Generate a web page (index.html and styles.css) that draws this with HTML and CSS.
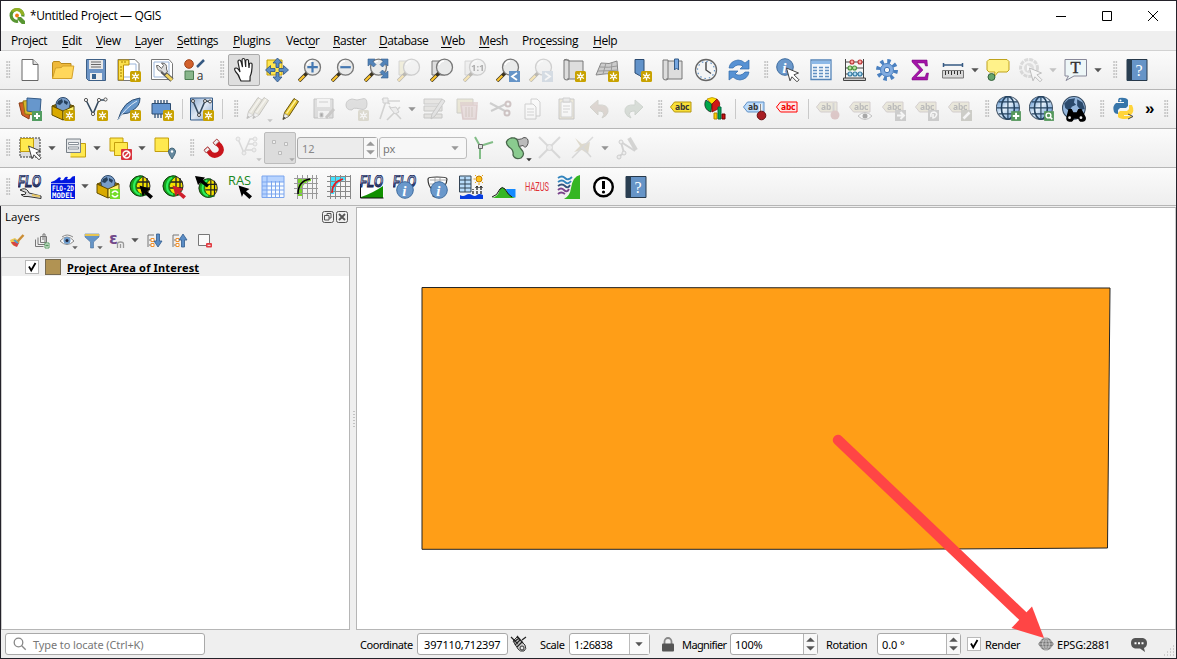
FILE: index.html
```html
<!DOCTYPE html>
<html lang="en">
<head>
<meta charset="utf-8">
<title>*Untitled Project — QGIS</title>
<link rel="stylesheet" href="styles.css">
</head>
<body>
<svg class="defs" width="0" height="0">
<defs>
<linearGradient id="steel" x1="0" y1="0" x2="0" y2="1"><stop offset=".15" stop-color="#7f9ad0"/><stop offset=".5" stop-color="#c9d6f0"/><stop offset=".6" stop-color="#4a64a8"/><stop offset="1" stop-color="#10183c"/></linearGradient>
<linearGradient id="sky" x1="0" y1="0" x2="1" y2="1"><stop offset="0" stop-color="#8fadd2"/><stop offset=".5" stop-color="#dfe8f3"/><stop offset="1" stop-color="#7f9dc4"/></linearGradient>
<linearGradient id="ocean" x1="0" y1="0" x2="1" y2="1"><stop offset="0" stop-color="#3f7fc4"/><stop offset=".45" stop-color="#e4f0fb"/><stop offset="1" stop-color="#3c7cc2"/></linearGradient>
<symbol id="star" viewBox="0 0 24 24"><rect x="13" y="13" width="11" height="11" rx="1.500" fill="#c8a200"/><path d="M18.500 14.500v8M15 16.500l7 4M15 20.500l7-4" stroke="#fff" stroke-width="1.300"/><circle cx="18.500" cy="18.500" r="1.900" fill="#fff"/><circle cx="18.500" cy="18.500" r=".8" fill="#c8a200"/></symbol>
<symbol id="mag" viewBox="0 0 24 24"><path d="M1 23l8-8" stroke="#3b3320" stroke-width="3.600"/><path d="M1.300 22.700l5-5" stroke="#fcc52e" stroke-width="2.200"/><circle cx="14.500" cy="9.200" r="8" fill="#e9eaea" stroke="#777" stroke-width="1.300"/><path d="M9 7a6 6 0 0 1 5-4" fill="none" stroke="#fff" stroke-width="1.500"/></symbol>
<symbol id="cursor" viewBox="0 0 24 24"><path d="M10.500 10l12 5-4.500 1.800 5 5-2 2-5-5-2 4z" fill="#fff" stroke="#444" stroke-width="1"/></symbol>
<symbol id="tag" viewBox="0 0 24 24"><path d="M1.500 10l4-5h16.500v10H5.500z"/></symbol>
<symbol id="globe" viewBox="0 0 24 24"><circle cx="11" cy="11" r="10.700" fill="url(#ocean)" stroke="#4a5a6c" stroke-width="1"/><path d="M11 .5v21M2.500 5.500h17M.5 11h21M2.500 16.500h17" fill="none" stroke="#24425f" stroke-width="1.100"/><ellipse cx="11" cy="11" rx="6" ry="10.500" fill="none" stroke="#24425f" stroke-width="1.500"/></symbol>
<symbol id="gglobe" viewBox="0 0 24 24"><circle cx="11" cy="11" r="10" fill="#f3e300" stroke="#222" stroke-width="1"/><path d="M14 1v20M18 3v16M8 7h12.500M8 13h13" stroke="#222" stroke-width="1.300"/><path d="M11 .8A10.200 10.200 0 0 0 12 21.200l6-1.500q-9 .3-10.500-6T14 1z" fill="#17a51f" stroke="#064b0d" stroke-width=".8"/><path d="M10 2.500q-5 3-5 9t6 8" fill="none" stroke="#2fef5f" stroke-width="2"/></symbol>
<symbol id="arrowbig" viewBox="0 0 24 24"><path d="M10.500 10.500l11 3.500-3.500 2.200 6 5-2.600 2.800-6-5.500-1.500 3.500z"/></symbol>
<symbol id="info" viewBox="0 0 24 24"><circle cx="9" cy="9" r="8.300" fill="#6a98cb" stroke="#3e6c9f"/><text x="6.200" y="14.500" font-family="Liberation Serif" font-size="15" font-style="italic" font-weight="700" fill="#fff">i</text></symbol>
<symbol id="flo" viewBox="0 0 24 24"><text x="0" y="12.300" textLength="23" lengthAdjust="spacingAndGlyphs" font-family="Liberation Sans" font-size="16.500" font-weight="700" font-style="italic" fill="url(#steel)" stroke="#16204a" stroke-width="1">FLO</text></symbol>
<symbol id="helpbook" viewBox="0 0 24 24"><path d="M2 1.500h20v21H2z" fill="#6694c7" stroke="#26384a"/><path d="M2 1h5v22H2z" fill="#293e51"/><text x="10.500" y="17.500" font-family="Liberation Serif" font-size="16" fill="#fff">?</text></symbol>
<symbol id="pencil" viewBox="0 0 24 24"><path d="M4 22.500l1.500-7L15 1.500l4.500 3L10 19z" fill="#e5c42d" stroke="#66520b"/><path d="M7.500 16.500L17 3" stroke="#fff29b" stroke-width="1.400"/><path d="M4 22.500l1.500-6L10 19z" fill="#eee" stroke="#777" stroke-width=".5"/><path d="M4 22.500l.7-2.700 2 1.200z" fill="#333"/></symbol>
<symbol id="down" viewBox="0 0 8 5"><path d="M.3.3h7.400L4 4.300z"/></symbol>
<symbol id="cube" viewBox="0 0 24 24"><path d="M1 9l10-4 12 4-11 5z" fill="#8c6b00" stroke="#614c00"/><circle cx="12" cy="7.500" r="7" fill="#789dc8" stroke="#2c496b"/><path d="M7 4l4-2 1 3-3 3-3-1zM13 3l4 2-1 3-3-2z" fill="#27415c"/><path d="M1 9l11 5v9L1 18z" fill="#d9aa00" stroke="#614c00"/><path d="M12 14l11-5v9l-11 5z" fill="#fff36a" stroke="#614c00"/></symbol>
</defs>
</svg>

<div class="window">
<header class="titlebar">
 <svg class="logo" viewBox="0 0 16 16"><path d="M9 13.200A5.900 5.900 0 1 1 13.800 8.500" fill="none" stroke="#589632" stroke-width="3.200"/><path d="M3.300 3.600A5.900 5.900 0 0 1 13.700 7" fill="none" stroke="#93b023" stroke-width="3"/><path d="M8.500 9H12l4 4v3h-3.200L8.500 11.500z" fill="#589632"/><circle cx="8" cy="7.500" r="1.900" fill="#ee7913"/></svg>
 <span class="title">*Untitled Project — QGIS</span>
 <div class="winctl">
  <svg viewBox="0 0 12 12"><path d="M1 6.500h10"/></svg><svg viewBox="0 0 12 12"><path d="M1.500 1.500h9v9h-9z"/></svg><svg viewBox="0 0 12 12"><path d="M1 1l10 10M11 1L1 11"/></svg>
 </div>
</header>

<nav class="menubar">
<span>Pro<u>j</u>ect</span><span><u>E</u>dit</span><span><u>V</u>iew</span><span><u>L</u>ayer</span><span><u>S</u>ettings</span><span><u>P</u>lugins</span><span>Vect<u>o</u>r</span><span><u>R</u>aster</span><span><u>D</u>atabase</span><span><u>W</u>eb</span><span><u>M</u>esh</span><span>Pro<u>c</u>essing</span><span><u>H</u>elp</span>
</nav>

<div class="toolbar">
<i class="grip"></i>
<b><svg viewBox="0 0 24 24"><path d="M4 1.500h11l5 5v16H4z" fill="#fff" stroke="#666"/><path d="M15 1.500v5h5" fill="#ddd" stroke="#666"/></svg></b>
<b><svg viewBox="0 0 24 24"><path d="M1.500 20.500V5l1-1.500h6L10 5.500h10V10" fill="#efb93a" stroke="#b88a1d"/><path d="M1.500 20.500L4.500 10l6-.5 1-1.500h11.300l-2 12.500z" fill="#ffd75b" stroke="#d3a12a"/></svg></b>
<b><svg viewBox="0 0 24 24"><path d="M2.500 1.500h19v21h-17l-2-2z" fill="#6c94c5" stroke="#3d5f86"/><path d="M5 2h14v9H5z" fill="#e8e8e8"/><path d="M7 4h10M7 6.500h10M7 9h10" stroke="#666"/><path d="M6 15h12v7H6z" fill="#eee"/><path d="M8 16h4v5H8z" fill="#35618e"/></svg></b>
<b><svg viewBox="0 0 24 24"><path d="M1 1.500h17l4 4v17H1z" fill="#fff" stroke="#777"/><path d="M6 6h13v13H6z" fill="#fff" stroke="#9bb5da"/><path d="M1.500 2H12v5H6.500v15h-5z" fill="#fbe04d" stroke="#bd9407"/><path d="M3 9h2M3 12h2M3 15h2M3 18h2M8 3v2M5 3v2" stroke="#a47e00"/><use href="#star"/></svg></b>
<b><svg viewBox="0 0 24 24"><path d="M1.500 1.500H19l3.500 4v16h-21z" fill="#fff" stroke="#777"/><path d="M4 4h15v15H4z" fill="#fff" stroke="#9bb5da"/><path d="M12 13l10 9" stroke="#555" stroke-width="4.600"/><path d="M16 16.500l6 5.500" stroke="#f2d45d" stroke-width="3"/><path d="M8.500 7.500l3 3 2-3-2-2.500q6 0 5 6l1 3-3 2-3-3q-4 1-5-5.500z" fill="#ddd" stroke="#666"/></svg></b>
<b><svg viewBox="0 0 24 24"><circle cx="6" cy="6" r="4.300" fill="#d2612c" stroke="#9e4219"/><path d="M21 2l-7 7" stroke="#365a83" stroke-width="2.500"/><path d="M2 13h8.500v8.500H2z" fill="#89b68c" stroke="#4c7d51"/><text x="13.800" y="21.500" font-family="Open Sans" font-size="12" fill="#333">a</text></svg></b>
<i class="grip"></i>
<b class="pressed"><svg viewBox="0 0 24 24"><path d="M8 21q-1-4-4.500-7.500Q1.500 10 4 10q2 0 4 4L6 4q0-2 1.300-2T9.200 4l1.300 5L10 2.500Q10 .5 11.500.5T13 2.500l.7 6.500V3.500q0-2 1.500-2t1.300 2L17 10l.3-3.500Q17.500 5 18.800 5t1.300 1.500q0 8-2 12L18 23H9z" fill="#fff" stroke="#222" stroke-width="1.200"/></svg></b>
<b><svg viewBox="0 0 24 24"><path d="M2 2h15v15H2z" fill="#ffe64f" stroke="#c19c08"/><path d="M12.500 0l4.500 5h-3v4.500h-3V5H8zM12.500 24l4.500-5h-3v-4.500h-3V19H8zM.5 12l5-4.500V10.500H10v3H5.500v3zM23.500 12l-5-4.500V10.500H14v3h4.500v3z" fill="#5c8dc4" stroke="#2d5280" stroke-width=".8"/></svg></b>
<b><svg viewBox="0 0 24 24"><use href="#mag"/><path d="M14.500 4v10.500M9.300 9.200h10.500" stroke="#4478b2" stroke-width="2.200"/></svg></b>
<b><svg viewBox="0 0 24 24"><use href="#mag"/><path d="M9.300 9.200h10.500" stroke="#4478b2" stroke-width="2.200"/></svg></b>
<b><svg viewBox="0 0 24 24"><use href="#mag"/><g fill="#5283b8" stroke="#365e8d" stroke-width=".6"><path d="M4 1h7L9 3.500l3 3-2.500 2.500-3-3L4 8zM24 1v7l-2.500-2-3 3L16 6.500l3-3L17 1zM24 20h-7l2-2.500-3-3 2.500-2.500 3 3L24 13z"/></g></svg></b>
<b class="off"><svg viewBox="0 0 24 24"><path d="M2 3h13v14H2z" fill="#e1d9a0" stroke="#888"/><use href="#mag"/></svg></b>
<b><svg viewBox="0 0 24 24"><path d="M2 3h13v14H2z" fill="#ddd" stroke="#777"/><use href="#mag"/></svg></b>
<b class="off"><svg viewBox="0 0 24 24"><path d="M2 3h13v14H2z" fill="#ddd" stroke="#888"/><use href="#mag"/><text x="8" y="13" font-family="Noto Sans" font-weight="700" font-size="9.500">1:1</text></svg></b>
<b><svg viewBox="0 0 24 24"><use href="#mag"/><path d="M13 13h11v11H13z" fill="#6694c7"/><path d="M21 15l-5 3.500 5 3.500" fill="none" stroke="#fff" stroke-width="1.800"/></svg></b>
<b class="off"><svg viewBox="0 0 24 24"><use href="#mag"/><path d="M13 13h11v11H13z" fill="#91a8c1"/><path d="M16 15l5 3.500-5 3.500" fill="none" stroke="#fff" stroke-width="1.800"/></svg></b>
<b><svg viewBox="0 0 24 24"><path d="M2 2h5v18q0 2-2 2-3 0-3-2zM7 3h14v18H5" fill="#ddd" stroke="#777"/><path d="M2 2q2-2 5 1" fill="none" stroke="#777"/><use href="#star"/></svg></b>
<b><svg viewBox="0 0 24 24"><path d="M6 5q8 2 16-2l1 13q-12-1-22 1z" fill="#ccc" stroke="#888"/><path d="M5 9q9 1 17-1M3 13q10 0 20-1M11 5L8 16M17 4l-1 12" fill="none" stroke="#999"/><use href="#star"/></svg></b>
<b><svg viewBox="0 0 24 24"><path d="M7 1.500h9V21l-4.500-3.500L7 15z" fill="#6293ca" stroke="#2b4a70"/><use href="#star"/></svg></b>
<b><svg viewBox="0 0 24 24"><path d="M2 2h5v18q0 2-2 2-3 0-3-2zM7 3h14v18H5" fill="#ddd" stroke="#777"/><path d="M13.500 1h4v11l-2-2-2 2z" fill="#77a7e0" stroke="#335a87"/></svg></b>
<b><svg viewBox="0 0 24 24"><circle cx="12" cy="12" r="10.500" fill="#f4f5f5" stroke="#666" stroke-width="1.300"/><circle cx="12" cy="12" r="8.500" fill="none" stroke="#6694c7" stroke-width="1.200" stroke-dasharray="1.500 2.950"/><path d="M12 4v8l5 3.500" fill="none" stroke="#444" stroke-width="1.400"/></svg></b>
<b><svg viewBox="0 0 24 24"><path d="M2 10Q3 3 11 2q4 0 7 3l4-3v9h-9l3-3q-6-3-10 2zM22 14q-1 7-9 8-4 0-7-3l-4 3v-9h9l-3 3q6 3 10-2z" fill="#5792d4" stroke="#326aa9" stroke-width=".7"/></svg></b>
<i class="grip"></i>
<b><svg viewBox="0 0 24 24"><use href="#info"/><use href="#cursor"/></svg></b>
<b><svg viewBox="0 0 24 24"><path d="M2 2h20v19.500H2z" fill="#f1f6fb" stroke="#5484b8" stroke-width="1.300"/><path d="M2.500 3h19v3h-19z" fill="#8db9e7"/><path d="M4 9.500h4M10 9.500h4M16 9.500h4M4 12.500h4M10 12.500h4M16 12.500h4M4 15.500h4M10 15.500h4M16 15.500h4M4 18.500h4M10 18.500h4M16 18.500h4" stroke="#6290c1" stroke-width="1.300"/></svg></b>
<b><svg viewBox="0 0 24 24"><path d="M3.500 1v19M21.500 1v19M3.500 4h18M3.500 10h18M3.500 16h18" stroke="#444"/><path d="M1.500 20h22v2.500h-22z" fill="#ccc" stroke="#444"/><g stroke-width="1.100"><g fill="#f9a7a3" stroke="#b33"><circle cx="10" cy="4" r="2"/><circle cx="18" cy="4" r="2"/></g><g fill="#b8e2a0" stroke="#48913a"><circle cx="8" cy="10" r="2"/><circle cx="12.500" cy="10" r="2"/></g><g fill="#afdcf5" stroke="#347aa2"><circle cx="8" cy="16" r="2"/><circle cx="13" cy="16" r="2"/><circle cx="18" cy="16" r="2"/></g></g></svg></b>
<b><svg viewBox="0 0 24 24"><circle cx="12" cy="12" r="8.700" fill="none" stroke="#4a80c0" stroke-width="4.500" stroke-dasharray="3.300 3.530"/><circle cx="12" cy="12" r="6.500" fill="#82ace0" stroke="#4a80c0"/><circle cx="12" cy="12" r="2.700" fill="#f7f7f7" stroke="#3e73b4"/></svg></b>
<b><svg viewBox="0 0 24 24"><path d="M4 2h15l.5 6h-2l-1-3H9l6 7-7 7h9l1.500-4h2l-1 7H4v-2l7.500-8L4 4z" fill="#a314a7" stroke="#730079" stroke-width=".5"/></svg></b>
<b><svg viewBox="0 0 24 24"><path d="M2 7h20M2.500 5v4M21.500 5v4" stroke="#365a83" stroke-width="1.500"/><path d="M1.500 12.500h21V20h-21z" fill="#d8d8d8" stroke="#777"/><path d="M4.500 13v4M7.500 13v3M10.500 13v4M13.500 13v3M16.500 13v4M19.500 13v3" stroke="#333"/></svg></b>
<s><svg><use href="#down"/></svg></s>
<b><svg viewBox="0 0 24 24"><path d="M7 17v4" stroke="#555"/><path d="M3 1.500h18l2 2V12l-2 2H12l-4 5 1-5H3l-2-2V3.500z" fill="#fff28a" stroke="#bfa31c"/><circle cx="5.500" cy="19" r="3.500" fill="#68a56d" stroke="#34623b"/></svg></b>
<b class="off"><svg viewBox="0 0 24 24"><circle cx="10" cy="10" r="8.500" fill="#eee" stroke="#999" stroke-width="3" stroke-dasharray="4 1"/><circle cx="10" cy="10" r="5" fill="#aaa"/><path d="M8 7l5 3-5 3z" fill="#fff"/><use href="#cursor"/></svg></b>
<s class="off"><svg><use href="#down"/></svg></s>
<b><svg viewBox="0 0 24 24"><path d="M1 1.500h21.500V18H10l-8 4.500L4.500 18H1z" fill="#eef7f8" stroke="#889"/><text x="6.500" y="15" font-family="Liberation Serif" font-size="16.500" fill="#333" stroke="#333" stroke-width=".4">T</text></svg></b>
<s><svg><use href="#down"/></svg></s>
<i class="grip"></i>
<b><svg viewBox="0 0 24 24"><use href="#helpbook"/></svg></b>
</div>

<div class="toolbar">
<i class="grip"></i>
<b><svg viewBox="0 0 24 24"><path d="M1 6l12-1-2 17-7-4z" fill="#d15f28" stroke="#8b3c13"/><path d="M5 4l12-1v15l-10-1z" fill="#d7b62d" stroke="#92770e"/><path d="M9 1l14 1-1 14-13-2z" fill="#6797cc" stroke="#345b87"/><path d="M14 14h10v10H14z" fill="#529d61"/><path d="M19 16v6M16 19h6" stroke="#fff" stroke-width="2"/></svg></b>
<b><svg viewBox="0 0 24 24"><use href="#cube"/><use href="#star"/></svg></b>
<b><svg viewBox="0 0 24 24"><path d="M2 3l7 14 6-14h6.500" fill="none" stroke="#34495e" stroke-width="1.600"/><g fill="#fff" stroke="#555"><circle cx="2" cy="3" r="1.600"/><circle cx="9" cy="17" r="1.600"/><circle cx="15" cy="3" r="1.600"/><circle cx="21.500" cy="2.500" r="1.600"/></g><use href="#star"/></svg></b>
<b><svg viewBox="0 0 24 24"><path d="M1 23Q6 3 23 1q0 8-7 12-4 4-11 4z" fill="#6797cb" stroke="#2c4c70"/><path d="M1 23Q9 10 20 4" stroke="#dce9f7" fill="none"/><use href="#star"/></svg></b>
<b><svg viewBox="0 0 24 24"><path d="M5 3v4M8 3v4M11 3v4M14 3v4M17 3v4M5 17v4M8 17v4M11 17v4" stroke="#2c4c70" stroke-width="1.300"/><path d="M2 6.500h18.500V17H2z" fill="#6495d0" stroke="#2c4c70"/><use href="#star"/></svg></b>
<em></em>
<b><svg viewBox="0 0 24 24"><path d="M.5 1h22v22H.5z" fill="url(#sky)" stroke="#345b87"/><path d="M3 4l6 14 6-14 5 .5" fill="none" stroke="#34495e" stroke-width="1.600"/><g fill="#fff" stroke="#444"><circle cx="3" cy="4" r="1.500"/><circle cx="9" cy="18" r="1.500"/><circle cx="15" cy="4" r="1.500"/><circle cx="20" cy="4.500" r="1.500"/></g><use href="#star"/></svg></b>
<em></em>
<i class="grip"></i>
<b class="off"><svg class="gray" viewBox="0 0 24 24"><use href="#pencil" x="-3" y="-1"/><use href="#pencil" x="3" y="-1"/></svg><svg class="corner"><use href="#down"/></svg></b>
<b><svg viewBox="0 0 24 24"><use href="#pencil"/></svg></b>
<b class="off"><svg class="gray" viewBox="0 0 24 24"><path d="M2 2h19v19H2z" fill="#aaa" stroke="#555"/><path d="M5 2h13v8H5zM6 14h11v7H6z" fill="#eee"/><path d="M7 5h9M8 16h3v4H8z" stroke="#777"/><path d="M14 21l8-9" stroke="#765" stroke-width="3"/></svg></b>
<b class="off"><svg class="gray" viewBox="0 0 24 24"><path d="M7 2q5 2 10 0t5 5-7 5-8 1Q1 13 1 8t6-6z" fill="#aaa" stroke="#666"/><use href="#star"/></svg></b>
<b class="off"><svg class="gray" viewBox="0 0 24 24"><path d="M2 22L8 4M8 4h14M4 2l8 5M9 23L22 10M11 9l12 13" fill="none" stroke="#887" stroke-width="1.600"/><path d="M5 1h5v5H5zM12 11l6-1 3 5-4 2z" fill="#ddd" stroke="#777"/></svg></b>
<s class="off half"><svg><use href="#down"/></svg></s>
<b class="off"><svg class="gray" viewBox="0 0 24 24"><path d="M1 2h18v5H1zM1 9h18v5H1zM1 17h18v4H1z" fill="#ccbf9d" stroke="#665"/><path d="M8 22l1-5L19 2l3 2-10 15z" fill="#bbb" stroke="#665"/></svg></b>
<b class="off"><svg viewBox="0 0 24 24"><path d="M1 2h16v14H1z" fill="#cfc58f" stroke="#776"/><path d="M4 6h18M5 8h16l-1 14H7z" fill="#caa" stroke="#a77" stroke-width="1.600"/><path d="M10 10v10M13 10v10M16 10v10" stroke="#865"/></svg></b>
<b class="off"><svg viewBox="0 0 24 24"><path d="M1 6l15 8M2 14l15-7" stroke="#777" stroke-width="2"/><g fill="none" stroke="#755" stroke-width="2"><circle cx="19" cy="7" r="2.500"/><circle cx="18" cy="16" r="2.500"/></g></svg></b>
<b class="off"><svg viewBox="0 0 24 24"><g fill="#fff" stroke="#777"><path d="M9 2h6l3 3v14H9z"/><path d="M3 7h8l3 3v12H3z"/></g><path d="M5 12h7M5 15h7M5 18h7" stroke="#888"/></svg></b>
<b class="off"><svg viewBox="0 0 24 24"><path d="M4 2h15v20H4z" fill="#d8ca9c" stroke="#666"/><path d="M6 5h11v15H6z" fill="#fff" stroke="#888"/><path d="M8 1h7v4H8z" fill="#ccc" stroke="#777"/><path d="M8 9h7M8 12h7M8 15h5" stroke="#888"/></svg></b>
<b class="off"><svg viewBox="0 0 24 24"><path d="M2 10l8-7v5q11-1 10 7-1 4-6 6 3-4 1-6-2-1-5-1v4z" fill="#a58f7f" stroke="#887"/></svg></b>
<b class="off"><svg viewBox="0 0 24 24"><path d="M22 10l-8-7v5Q3 7 4 15q1 4 6 6-3-4-1-6 2-1 5-1v4z" fill="#95a795" stroke="#787"/></svg></b>
<i class="grip"></i>
<b><svg viewBox="0 0 24 24"><use href="#tag" x="-1" fill="#f9df38" stroke="#b59610"/><text class="abc" x="5" y="13">abc</text></svg></b>
<b><svg viewBox="0 0 24 24"><path d="M9 7L3 3a8 8 0 0 0 5 12z" fill="#00a64b" stroke="#111" stroke-width=".7"/><path d="M9 7L4 2q5-3 10 0z" fill="#fd0" stroke="#a80" stroke-width=".7"/><path d="M9 7l5-5q5 5 1 10l-6 3z" fill="#d01717" stroke="#700" stroke-width=".7"/><path d="M11 16h3v6h-3z" fill="#fc0" stroke="#a80"/><path d="M15 10h3v12h-3z" fill="#00a64b" stroke="#064"/><path d="M19 17h3v5h-3z" fill="#c11" stroke="#600"/></svg></b>
<em></em>
<b><svg viewBox="0 0 24 24"><use href="#tag" x="-1" fill="#bcdcfc" stroke="#6090c5"/><text class="abc" x="5" y="13">ab</text><path d="M17.500 7v9" stroke="#eee" stroke-width="3"/><path d="M17.500 7v9" stroke="#888" stroke-width="1"/><circle cx="18.500" cy="18.500" r="4.300" fill="#a91e24" stroke="#670e12"/></svg></b>
<b><svg viewBox="0 0 24 24"><use href="#tag" x="-1" fill="#ffe6e6" stroke="#f00"/><text class="abc red" x="5" y="13">abc</text></svg></b>
<em></em>
<b class="off"><svg viewBox="0 0 24 24"><use href="#tag" x="-1" fill="#cdc59d" stroke="#877"/><text class="abc" x="5" y="13">ab</text><path d="M17.500 6v12" stroke="#888" stroke-width="2"/><circle cx="19" cy="18" r="4.500" fill="#a66"/></svg></b>
<b class="off"><svg viewBox="0 0 24 24"><use href="#tag" x="-1" fill="#cdc59d" stroke="#877"/><text class="abc" x="5" y="13">abc</text><path d="M9 19q7-7 14 0-7 7-14 0z" fill="#fff" stroke="#555"/><circle cx="16" cy="19" r="2.500"/></svg></b>
<b class="off"><svg viewBox="0 0 24 24"><use href="#tag" x="-1" fill="#cdc59d" stroke="#877"/><text class="abc" x="5" y="13">abc</text><path d="M13 13h11v11H13z" fill="#777"/><path d="M15 18.500h6M18.500 15l3.500 3.500-3.500 3.500" fill="none" stroke="#fff" stroke-width="2"/></svg></b>
<b class="off"><svg viewBox="0 0 24 24"><use href="#tag" x="-1" fill="#cdc59d" stroke="#877"/><text class="abc" x="5" y="13">abc</text><path d="M13 13h11v11H13z" fill="#777"/><path d="M16 20q-1-5 3-5 4 1 2 4-1 2-3 2v-4" fill="none" stroke="#fff" stroke-width="1.600"/></svg></b>
<b class="off"><svg viewBox="0 0 24 24"><use href="#tag" x="-1" fill="#cdc59d" stroke="#877"/><text class="abc" x="5" y="13">abc</text><path d="M13 13h11v11H13z" fill="#776"/><path d="M15.500 21.500l6-6" stroke="#fff" stroke-width="2.500"/></svg></b>
<i class="grip"></i>
<b><svg class="big" viewBox="0 0 24 24"><use href="#globe"/><path d="M14 14h9v9h-9z" fill="#55985c"/><path d="M18.500 15.500v6M15.500 18.500h6" stroke="#fff" stroke-width="1.800"/></svg></b>
<b><svg class="big" viewBox="0 0 24 24"><use href="#globe"/><path d="M14 14h9v9h-9z" fill="#55985c"/><circle cx="18" cy="18" r="2.200" fill="none" stroke="#fff" stroke-width="1.300"/><path d="M19.500 19.500l2 2" stroke="#fff" stroke-width="1.500"/></svg></b>
<b><svg class="big" viewBox="0 0 24 24"><circle cx="11" cy="11" r="10.500" fill="#94b6dc" stroke="#33485e"/><path d="M2 7l4-4 6-1-1 4 2 2-4 2-2 4-4-3zM14 3l5 3 2 6-4 1-3-4z" fill="#2b4a6c"/><path d="M6 12h3l1.500 3h3l1.500-3h3l4 7.500a3.500 3.500 0 0 1-7 1.500h-4a3.500 3.500 0 0 1-7-1.500z" fill="#000"/><circle cx="7" cy="20" r="1.300" fill="#eee"/><circle cx="17.500" cy="20" r="1.300" fill="#eee"/></svg></b>
<i class="grip"></i>
<b><svg viewBox="0 0 24 24"><path d="M7 1q-1 1-1 4h6v1H4q-4 3-2 9 1 2 4 2v-4l2-2h6l2-2V3q-2-3-9-2z" fill="#3775a9"/><path d="M13 22q6 0 7-3h-8v-1h7q4-4 1-10h-3v4l-2 2H8l-2 2v4q2 2 7 2z" fill="#ffd43b"/><circle cx="8.500" cy="3.500" r="1" fill="#fff"/><path d="M16 17l5 2.500-5 2.500" fill="none" stroke="#444"/></svg></b>
<span class="more">»</span>
<i class="grip"></i>
</div>

<div class="toolbar">
<i class="grip"></i>
<b><svg viewBox="0 0 24 24"><path d="M2 2h20v19H2z" fill="#ddd" stroke="#333" stroke-dasharray="2 1"/><path d="M2.500 2.500h13v13h-13z" fill="#ffe94f" stroke="#c39e0d"/><use href="#cursor"/></svg></b>
<s><svg><use href="#down"/></svg></s>
<b><svg viewBox="0 0 24 24"><path d="M7.500 7.500h15v13.500h-15" fill="#ffe94f" stroke="#c39e0d"/><path d="M3.500 3h14v13.500h-14z" fill="#e6e8ea" stroke="#777f86"/><path d="M5.500 6.500h10v2h-10zM5.500 11h10v2h-10z" fill="#fff" stroke="#8a929a"/></svg></b>
<s><svg><use href="#down"/></svg></s>
<b><svg viewBox="0 0 24 24"><g fill="#ffe94f" stroke="#c39e0d"><path d="M2 2h13v13H2z"/><path d="M6.500 6.500h13v13h-13z"/></g><rect x="13" y="13" width="11" height="11" rx="1" fill="#d9333d"/><circle cx="18.500" cy="18.500" r="3.500" fill="none" stroke="#fff" stroke-width="1.400"/><path d="M16 21l5-5" stroke="#fff" stroke-width="1.400"/></svg></b>
<s><svg><use href="#down"/></svg></s>
<b><svg viewBox="0 0 24 24"><path d="M2 2h13.500v13.500H2z" fill="#ffe94f" stroke="#c39e0d"/><path d="M19 23q-4-6-3.500-8 1-3 3.500-3t3.500 3Q23 17 19 23z" fill="#66899f" stroke="#45677a"/><circle cx="19" cy="15.500" r="1.200" fill="#fff"/></svg></b>
<i class="grip"></i>
<b><svg viewBox="0 0 24 24"><path d="M4 12l5 6q4 3 8.500-.5Q21 14 18 10l-5-5" fill="none" stroke="#c9141b" stroke-width="5"/><path d="M2 14.300l3.700-3.400 2.200 2.600-3.700 3.400zM11 6.700L14.800 3l2.400 2.600-3.800 3.700z" fill="#eee" stroke="#a44"/></svg></b>
<b class="off"><svg class="gray" viewBox="0 0 24 24"><path d="M3 3l6 14 6-14h6M11 14h8M13 8h7" fill="none" stroke="#999" stroke-width="1.600"/><g fill="#ddd" stroke="#999"><circle cx="3" cy="3" r="2"/><circle cx="9" cy="17" r="2"/><circle cx="20" cy="3" r="2"/><circle cx="20" cy="8" r="2"/><circle cx="19" cy="14" r="2"/></g></svg><svg class="corner"><use href="#down"/></svg></b>
<b class="pressed dim"><svg viewBox="0 0 24 24"><g fill="#eee" stroke="#bbb"><path d="M4.500 4.500h3v3h-3zM16.500 6.500h3v3h-3zM10.500 15.500h3v3h-3z"/></g></svg><svg class="corner"><use href="#down"/></svg></b>
<div class="spin tol"><span>12</span><svg class="ud" viewBox="0 0 8 13"><path d="M0 4.500h8L4 .5zM0 8.500h8l-4 4z"/></svg></div>
<div class="unit"><span>px</span><svg class="dn"><use href="#down"/></svg></div>
<b><svg viewBox="0 0 24 24"><path d="M3 1l5 9L21 6M8 11v12" fill="none" stroke="#82bd87" stroke-width="2"/><path d="M6.500 8.500h4v4h-4z" fill="#ddd" stroke="#666"/></svg></b>
<b><svg viewBox="0 0 24 24"><path d="M9 2q5 3 10-.5 5 0 4 6-2 6-5 2-4 2-9 0z" fill="#bbb" stroke="#555"/><path d="M6 2q6-1 7 4 0 4 3 7 5 5 0 9-6 2-8-3 1-5-4-8-6-6 2-9z" fill="#8acb8f" stroke="#47664a" stroke-width="1.300"/></svg><svg class="corner dark"><use href="#down"/></svg></b>
<b class="off"><svg class="gray" viewBox="0 0 24 24"><path d="M1 1l21 21M22 1L1 22" stroke="#999" stroke-width="2"/><circle cx="11.500" cy="11.500" r="3" fill="#ddd" stroke="#888"/></svg></b>
<b class="off"><svg viewBox="0 0 24 24"><path d="M4 2l7 6 8-2-2 12-6-4-8 2 6-6z" fill="#a99a71"/><path d="M1 22L22 1M12 12l8 9" stroke="#999" stroke-width="1.500"/></svg></b>
<s class="off half"><svg><use href="#down"/></svg></s>
<b class="off"><svg class="gray" viewBox="0 0 24 24"><path d="M2 21l6-4L5 6l14 9" fill="none" stroke="#888" stroke-width="2"/><g fill="#ddd" stroke="#777"><circle cx="3" cy="21" r="2"/><circle cx="8" cy="17" r="2"/><circle cx="5" cy="6" r="2"/></g><path d="M13 2l7 12" stroke="#887" stroke-width="4"/></svg></b>
</div>

<div class="toolbar last">
<i class="grip"></i>
<b><svg viewBox="0 0 24 24"><use href="#flo"/><path d="M2 15q5-3 8 1l1 2 12 3v2.500l-13-2q-5 1-7-2l4 0 1-2z" fill="#ddd" stroke="#333"/><path d="M14 20l8 1.500" stroke="#e7c766" stroke-width="2"/></svg></b>
<b><svg viewBox="0 0 24 24"><path d="M0 7q4-1 6-3 2-3 4-1l-1 2q3 1 4-1 1-3 4-2l-1 2q3 1 4-1 1-2 4-2v23H0z" fill="#0017e0"/><path d="M0 8.500h24" stroke="#fff" stroke-width=".6"/><text x="1" y="15.500" textLength="22" lengthAdjust="spacingAndGlyphs" font-family="DejaVu Sans Mono" font-weight="700" font-size="7.500" fill="#fff">FLO-2D</text><text x="1" y="23" textLength="22" lengthAdjust="spacingAndGlyphs" font-family="DejaVu Sans Mono" font-weight="700" font-size="7.500" fill="#fff">MODEL</text></svg></b>
<s><svg><use href="#down"/></svg></s>
<b><svg viewBox="0 0 24 24"><use href="#cube"/><path d="M14 14h10v10H14z" fill="#75dc26"/><path d="M16 18q3-4 6 0M22 20q-3 4-6 0" fill="none" stroke="#fff" stroke-width="1.500"/></svg></b>
<b><svg viewBox="0 0 24 24"><use href="#gglobe"/><use href="#arrowbig"/></svg></b>
<b><svg viewBox="0 0 24 24"><use href="#gglobe"/><use href="#arrowbig" fill="#cf202c"/></svg></b>
<b><svg viewBox="0 0 24 24"><use href="#gglobe" x="3" y="3" width="22" height="22"/><path d="M0 1l10 1.500L8 5l6 5-2 2.500L5.500 7.500 3 10z"/></svg></b>
<b><svg viewBox="0 0 24 24"><text x="0" y="9.500" textLength="23" lengthAdjust="spacingAndGlyphs" font-family="Open Sans" font-size="12.500" fill="#178720">RAS</text><use href="#arrowbig"/></svg></b>
<b><svg viewBox="0 0 24 24"><path d="M1 1h22v22H1z" fill="#f7fbff"/><path d="M1 1h22v6H1zM1 1h5v22H1z" fill="#b8d4ff"/><path d="M1 1h22v21.500H1zM6 1v22M10.500 6v17M14.500 6v17M18.500 6v17M1 7h22M1 11h22M1 15h22M1 19h22" fill="none" stroke="#7ba5ee"/></svg></b>
<b><svg viewBox="0 0 24 24"><path d="M3 21V3h14v3q-7 1-9 7v8z" fill="#79d52b"/><path d="M0 3.500h24M0 8.500h24M0 13.500h24M0 18.500h24M3.500 0v24M8.500 0v24M13.500 0v24M18.500 0v24M22.500 0v24" stroke="#999"/><path d="M4 19Q4 6 16 4" fill="none" stroke="#000" stroke-width="1.500"/></svg></b>
<b><svg viewBox="0 0 24 24"><path d="M3 19V1h15v4q-9 1-11 14z" fill="#43e2ff"/><path d="M0 1.500h24M0 6.500h24M0 11.500h24M0 16.500h24M0 21.500h24M3.500 0v24M8.500 0v24M13.500 0v24M18.500 0v24M23.500 0v24" stroke="#888"/><path d="M5 18Q5 7 16 4" fill="none" stroke="#e31d23" stroke-width="1.600"/></svg></b>
<b><svg viewBox="0 0 24 24"><path d="M.5 11h23v12H.5z" fill="#fff"/><path d="M1 22q12-4 22-11v12H1z" fill="#119000"/><path d="M.5 9v14h23" fill="none" stroke="#111"/><use href="#flo"/></svg></b>
<b><svg viewBox="0 0 24 24"><use href="#flo"/><use href="#info" x="3" y="6"/></svg></b>
<b><svg viewBox="0 0 24 24"><path d="M2 4q0-2 9-2 10 0 10 2 0 4-3 8l-1 8q-8 3-10 1 1-5-1-7-4-3-4-10z" fill="#fff" stroke="#333" stroke-width="1.200"/><path d="M4 5h16M4 9h15M7 13h10M8 17h9M9 3v17M14 3v18" stroke="#aaa"/><use href="#info" x="4" y="6"/></svg></b>
<b><svg viewBox="0 0 24 24"><path d="M.5 1h11.500v16H.5z" fill="#b8dcfa" stroke="#345"/><path d="M1 5h11M1 9h11M1 13h11M6 2v15" stroke="#345" stroke-width="1"/><path d="M1 20q3 2 6 0t6 0 5 0 6 0v4H1z" fill="#063cdf"/><circle cx="20" cy="4" r="3" fill="#ffc31c" stroke="#c47d00"/><path d="M14.500 4H16M20 8v2M16 8l1-1M24 8l-1-1M24 0l-1 1M16 0l1 1" stroke="#e6a111"/><path d="M14 19v-5M18 19v-7M22 19v-7" stroke="#222" stroke-width="1.300" stroke-dasharray="3 1"/><path d="M16.500 13L18 11l1.500 2M20.500 13L22 11l1.500 2" stroke="#222" fill="none"/></svg></b>
<b><svg viewBox="0 0 24 24"><path d="M14 14h9.500v8.500H17z" fill="#148aff"/><path d="M0 23q6-1 8-9 2-3 5 0 3 7 10 9z" fill="#35b623"/><path d="M0 22q5-1 8-8 2-3 5 0 3 6 7 8" fill="none" stroke="#111"/></svg></b>
<b><svg viewBox="0 0 24 24"><text x="0" y="16" textLength="24" lengthAdjust="spacingAndGlyphs" font-family="Roboto" font-size="12.500" fill="#df3038">HAZUS</text></svg></b>
<b><svg viewBox="0 0 24 24"><path d="M22 0v24H6q6-3 7-11 2-12 9-13z" fill="#35b623"/><g fill="none" stroke-width="1.800"><path d="M0 3q4-3 7 0t7-1M0 7q4-3 7 0t6-1" stroke="#3284bd"/><path d="M0 11q4-3 7 0t5-1" stroke="#33527b"/><path d="M0 15q3-3 6 0t5-1M0 19q3-3 7 0" stroke="#7b448c"/></g></svg></b>
<b><svg viewBox="0 0 24 24"><circle cx="12.500" cy="12" r="9.300" fill="#fff" stroke="#000" stroke-width="2.400"/><path d="M12.500 6v8" stroke="#000" stroke-width="3"/><circle cx="12.500" cy="17" r="1.600"/></svg></b>
<b><svg viewBox="0 0 24 24"><use href="#helpbook"/></svg></b>
</div>

<main class="work">
 <aside class="layers">
  <div class="dockhead"><span>Layers</span>
   <svg viewBox="0 0 12 12"><rect x=".5" y=".5" width="11" height="11" rx="2"/><path d="M5 4V2.500h4V7H7M2.500 4.500h4.500v4.500H2.500z"/></svg>
   <svg viewBox="0 0 12 12"><rect x=".5" y=".5" width="11" height="11" rx="2"/><path d="M3 3l6 6M9 3L3 9" stroke-width="1.800"/></svg>
  </div>
  <div class="layertools">
   <b><svg viewBox="0 0 16 16"><path d="M1 7l5-2 5 4-4 4q-4 1-6-6z" fill="#f0c64b"/><path d="M2 9q2 4 6 5l2-4-4-1z" fill="#d64343"/><path d="M5 7l4 3" stroke="#559cce" stroke-width="2"/><path d="M8.500 8.500l6-6.500" stroke="#ca8d35" stroke-width="2.500"/></svg></b>
   <b><svg viewBox="0 0 16 16"><path d="M1.500 6.500v7h8M4 4.500v7h8M6.500 3.500h6v6h-6zM9 7V1h2v8" fill="none" stroke="#777"/><path d="M11 10h4v5h-4z" fill="#fff" stroke="#579a61"/><path d="M13 11v3M11.500 12.500h3" stroke="#579a61"/></svg></b>
   <b><svg viewBox="0 0 16 16"><path d="M1 8q7-8 14 0-7 7-14 0z" fill="#fff" stroke="#888"/><circle cx="8" cy="7.500" r="3.500" fill="#6e9ccb"/><circle cx="8" cy="7.500" r="1.500" fill="#223"/><path d="M3 4q5-4 11 0" fill="none" stroke="#888"/></svg><svg class="corner dark"><use href="#down"/></svg></b>
   <b><svg viewBox="0 0 16 16"><path d="M1 1h14v3L9.500 9v6h-3V9L1 4z" fill="#6594c6" stroke="#46719e" stroke-width=".6"/><path d="M1 1h14v2H1z" fill="#e5c452"/></svg><svg class="corner dark"><use href="#down"/></svg></b>
   <b><svg viewBox="0 0 16 16"><text x="0" y="10.500" font-family="DejaVu Sans" font-size="16" fill="#72498a">ε</text><path d="M8.500 15v-4q0-2 3-2t3 2v4M11.500 11v4" fill="none" stroke="#999" stroke-width="1.300"/></svg></b>
   <s><svg><use href="#down"/></svg></s>
   <b><svg viewBox="0 0 16 16"><path d="M1 2h6M1 2v12M2 7h3M2 12h3" fill="none" stroke="#777"/><path d="M4 5.500h3v3H4zM4 10.500h3v3H4z" fill="#fff" stroke="#f2902a"/><path d="M9.500 1h3v7H15l-4 6-4-6h2.500z" fill="#5b8dc5" stroke="#315c8e" stroke-width=".8"/></svg></b>
   <b><svg viewBox="0 0 16 16"><path d="M1 2h6M1 2v12M2 7h3M2 12h3" fill="none" stroke="#777"/><path d="M4 5.500h3v3H4zM4 10.500h3v3H4z" fill="#fff" stroke="#f2902a"/><path d="M9.500 14h3V7H15l-4-6-4 6h2.500z" fill="#5b8dc5" stroke="#315c8e" stroke-width=".8"/></svg></b>
   <b><svg viewBox="0 0 16 16"><path d="M1.500 1.500h11v11h-11z" fill="#fafafa" stroke="#777"/><rect x="9" y="10" width="6" height="4.500" rx="1" fill="#e13c43"/><path d="M10.500 12.300h3" stroke="#fff"/></svg></b>
  </div>
  <div class="tree"><div class="node"><svg class="chk" viewBox="0 0 14 14"><rect x=".5" y=".5" width="13" height="13"/><path d="M4 6.500l2.200 4L10.500 3"/></svg><i class="swatch"></i><span>Project Area of Interest</span></div></div>
 </aside>
 <div class="splitter"><i></i></div>
 <section class="canvas">
  <svg viewBox="357 208 818 421"><path d="M422 287.500L1110 288 1107.500 548 900 549.300 422 549.300z" fill="#ff9e17" stroke="#232323"/></svg>
 </section>
</main>

<footer class="status">
 <div class="locate"><svg viewBox="0 0 14 14"><circle cx="5.500" cy="5.500" r="4.300"/><path d="M8.700 8.700l4 4"/></svg><span>Type to locate (Ctrl+K)</span></div>
 <label class="l-coord">Coordinate</label><div class="field coord">397110,712397</div>
 <svg class="mouse" viewBox="0 0 16 16"><path d="M2 5l4-4 8 8q2 4-1 6-4 1-6-2z" fill="#ccc" stroke="#333"/><path d="M3 6l5-4M4 9l5-5M6 11l5-5M0 1l7 7M6 0l6 7M11 4l4-3" fill="none" stroke="#222" stroke-width="1.200"/><circle cx="11" cy="12" r="2" fill="#eee" stroke="#333"/></svg>
 <label class="l-scale">Scale</label><div class="field scale"><span>1:26838</span><i><svg class="dn"><use href="#down"/></svg></i></div>
 <svg class="lock" viewBox="0 0 12 15"><path d="M2.500 7V4.500a3.500 3.500 0 0 1 7 0V7" fill="none" stroke="#888" stroke-width="1.800"/><rect y="6.500" width="12" height="8" rx="1" fill="#555"/></svg>
 <label class="l-mag">Magnifier</label><div class="spin magn"><span>100%</span><svg class="ud" viewBox="0 0 8 13"><path d="M0 4.500h8L4 .5zM0 8.500h8l-4 4z"/></svg></div>
 <label class="l-rot">Rotation</label><div class="spin rot"><span>0.0 °</span><svg class="ud" viewBox="0 0 8 13"><path d="M0 4.500h8L4 .5zM0 8.500h8l-4 4z"/></svg></div>
 <svg class="chk" viewBox="0 0 14 14"><rect x=".5" y=".5" width="13" height="13"/><path d="M4 6.500l2.200 4L10.500 3"/></svg><label class="l-ren">Render</label>
 <svg class="crs" viewBox="0 0 16 14"><path d="M0 7l4-5 4-2 4 2 4 5-4 5-4 2-4-2z" fill="#777"/><path d="M0 7h16M2 4h12M2 10h12M8 0v14M8 0Q1 7 8 14M8 0q7 7 0 14" fill="none" stroke="#ddd" stroke-width=".7"/></svg>
 <label class="l-epsg">EPSG:2881</label>
 <svg class="chat" viewBox="0 0 16 14"><path d="M4 0h8q4 1 4 5 0 4-3 5l1 4-5-3.500H4Q0 9.500 0 5t4-5z" fill="#555"/><path d="M3.500 5.200h9" stroke="#fff" stroke-width="2" stroke-dasharray="2 1.500"/></svg>
 <svg class="sizegrip" viewBox="0 0 12 12"><path d="M10 1h1M7 4h1M10 4h1M4 7h1M7 7h1M10 7h1M1 10h1M4 10h1M7 10h1M10 10h1" stroke="#aaa" stroke-width="1"/></svg>
</footer>
<svg class="pointer" viewBox="0 0 220 210"><path d="M9 9l190 181" stroke="#ff4545" stroke-width="10.500" stroke-linecap="round"/><path d="M215 207l-12-31.500L182.500 197z" fill="#ff4545"/></svg>
</div>
</body>
</html>
```
FILE: styles.css
```css
* { box-sizing: border-box; }
body {
  margin: 0;
  width: 1177px;
  height: 659px;
  overflow: hidden;
  background: #1d1b22;
  font: 11px "Noto Sans", sans-serif;
  color: #000;
}
.defs { position: absolute; }
svg { display: block; flex: none; overflow: visible; }
.window {
  position: relative;
  display: flex;
  flex-direction: column;
  width: 1177px;
  height: 659px;
  border: 1px solid #24222a;
  background: #efefef;
}
.titlebar {
  display: flex;
  align-items: center;
  height: 30px;
  flex: none;
  background: #fff;
  padding: 0 17px 1px 8px;
}
.logo { width: 16px; height: 16px; }
.title { margin-left: 5px; font: 12px "Open Sans", sans-serif; letter-spacing: -.37px; white-space: nowrap; }
.winctl { margin-left: auto; display: flex; gap: 34px; }
.winctl svg { width: 12px; height: 12px; fill: none; stroke: #000; }

.menubar {
  display: flex;
  gap: 14px;
  height: 20px;
  flex: none;
  padding-left: 10px;
  border-bottom: 1px solid #d2d2d2;
  font: 12px/19px "Open Sans", sans-serif;
  letter-spacing: -.42px;
}
.menubar span { white-space: nowrap; }
.menubar span:nth-child(1) { width: 37px; }
.menubar span:nth-child(2) { width: 20px; }
.menubar span:nth-child(3) { width: 25px; }
.menubar span:nth-child(4) { width: 28px; }
.menubar span:nth-child(5) { width: 42px; }
.menubar span:nth-child(6) { width: 39px; }
.menubar span:nth-child(7) { width: 33px; }
.menubar span:nth-child(8) { width: 32px; }
.menubar span:nth-child(9) { width: 48px; }
.menubar span:nth-child(10) { width: 24px; }
.menubar span:nth-child(11) { width: 29px; }
.menubar span:nth-child(12) { width: 57px; }
u { text-underline-offset: 2px; text-decoration-thickness: 1px; }

.toolbar {
  display: flex;
  align-items: center;
  height: 39px;
  flex: none;
  margin-left: -1px;
  border-bottom: 1px solid #b6b6b6;
  background: linear-gradient(#fbfbfb, #eee);
}
.toolbar.last { height: 38px; }
.grip {
  flex: none;
  width: 16px;
  height: 18px;
  padding: 0 3px 0 8px;
  background: radial-gradient(circle at 1px 1px, #bdbdbd .6px, transparent 1px) 0 0 / 2.5px 3px content-box content-box;
}
.grip:first-child { margin-left: -2px; }
.toolbar b { position: relative; flex: none; display: flex; align-items: center; width: 33px; height: 32px; padding-left: 4px; font-weight: 400; }
.toolbar b > svg { width: 24px; height: 24px; }
.toolbar b > svg.big { width: 26px; height: 26px; margin-left: -1px; }
.off { opacity: .3; }
.off.half { opacity: .6; }
.gray { filter: grayscale(.8); }
.toolbar b > svg.corner, .layertools b > svg.corner { position: absolute; right: 2px; bottom: 2px; width: 6px; height: 4px; fill: #666; }
.toolbar b > svg.corner.dark { fill: #333; }
.toolbar s, .layertools s { flex: none; width: 12px; padding-left: 1px; fill: #555; }
.toolbar s svg, .layertools s svg, .dn { width: 8px; height: 5px; }
.toolbar em { flex: none; width: 7px; height: 20px; background: linear-gradient(90deg, transparent 3px, #c9c9c9 3px, #c9c9c9 4px, transparent 4px); }
.toolbar em ~ b { left: -.5px; }
.pressed::before { content: ""; position: absolute; inset: 0 1px 0 0; border: 1px solid #aaa; border-radius: 2px; background: #dedede; }
.pressed > svg { position: relative; }
.pressed.dim::before { background: #dcdcdc; border-color: #bcbcbc; }
.toolbar .pressed.dim > svg.corner { position: absolute; fill: #aaa; }
.abc { font: 700 8.5px "Noto Sans", sans-serif; letter-spacing: -.2px; fill: #333; stroke: none; }
.abc.red { fill: #e00; }
.more { width: 15px; padding-left: 4px; font: 700 17px/20px "Liberation Sans", sans-serif; }

.spin, .field, .unit, .locate {
  display: flex;
  align-items: center;
  flex: none;
  height: 22px;
  border: 1px solid #a9a9a9;
  border-radius: 3px;
  background: #fff;
  white-space: nowrap;
}
.spin span { flex: 1; padding-left: 4px; }
.spin .ud { width: 14px; height: 20px; padding: 3px 2px; border-left: 1px solid #b3b3b3; fill: #555; background: #f8f8f8; }
.toolbar .tol { width: 81px; background: #ececec; color: #888; }
.toolbar .tol .ud { fill: #999; }
.unit { width: 88px; margin: 0 1px; padding: 0 7px 0 3px; justify-content: space-between; border-color: #bdbdbd; background: #f7f7f7; color: #777; fill: #999; }

.work { display: flex; height: 424px; flex: none; }
.layers { width: 349px; display: flex; flex-direction: column; }
.dockhead { display: flex; align-items: center; height: 21px; padding: 0 2px 0 4px; gap: 2px; }
.dockhead span { flex: 1; font: 11.5px "Open Sans", sans-serif; }
.dockhead svg { width: 12px; height: 12px; fill: none; stroke: #555; }
.layertools { display: flex; align-items: center; height: 30px; padding: 0 0 3px 3px; }
.layertools b { position: relative; display: flex; width: 25px; padding-left: 5px; }
.layertools s { width: 13px; padding-left: 2px; }
.layertools b > svg { width: 16px; height: 16px; }
.layertools b > svg.corner { right: 1px; bottom: -1px; }
.tree { flex: 1; border: 1px solid #b6b6b6; border-left-color: #ccc; background: #fff; }
.node { display: flex; align-items: center; height: 18px; padding-left: 23px; background: #efefef; }
.chk { width: 14px; height: 14px; }
.chk rect { fill: #fff; stroke: #b9b9b9; }
.chk path { fill: none; stroke: #000; stroke-width: 1.8; }
.swatch { width: 16px; height: 16px; margin: 0 6px; border: 1px solid #766a50; background: #b19353; }
.node span { font-weight: 700; letter-spacing: .17px; text-decoration: underline; white-space: nowrap; }
.splitter { width: 6px; display: flex; align-items: center; padding: 3px 0 0 3px; }
.splitter i { width: 2px; height: 17px; background: repeating-linear-gradient(#c2c2c2 0 1px, transparent 1px 3px); }
.canvas { flex: 1; margin-top: 1px; border: 1px solid #b6b6b6; border-right: 1px solid #ccc; background: #fff; }
.canvas svg { width: 818px; height: 421px; }

.status { display: flex; align-items: center; height: 28px; flex: none; padding-left: 4px; letter-spacing: -.1px; }
.status label { flex: none; white-space: nowrap; }
.locate { width: 200px; color: #777; padding-left: 7px; gap: 6px; }
.locate svg { width: 14px; height: 14px; fill: none; stroke: #888; stroke-width: 1.3; }
.l-coord { width: 57px; margin-left: 155px; letter-spacing: -.45px; }
.coord { width: 91px; padding-left: 6px; letter-spacing: -.15px; }
.mouse { width: 16px; height: 16px; margin-left: 3px; }
.l-scale { width: 29px; margin-left: 13px; letter-spacing: -.4px; }
.scale { width: 81px; }
.scale span { flex: 1; padding-left: 4px; letter-spacing: -.3px; }
.scale i { display: flex; align-items: center; width: 20px; height: 20px; padding-left: 5px; border-left: 1px solid #bbb; fill: #555; background: #fafafa; }
.lock { width: 12px; height: 15px; margin-left: 12px; }
.l-mag { width: 48px; margin-left: 8px; letter-spacing: -.6px; }
.magn { width: 88px; }
.l-rot { width: 51px; margin-left: 8px; letter-spacing: -.35px; }
.rot { width: 84px; }
.status > .chk { margin-left: 6px; }
.l-ren { width: 53px; margin-left: 4px; letter-spacing: -.35px; }
.crs { width: 16px; height: 14px; }
.l-epsg { width: 74px; margin-left: 3px; letter-spacing: -.2px; }
.chat { width: 16px; height: 14px; margin-top: 2px; }
.sizegrip { width: 12px; height: 12px; margin: 14px 0 0 16px; }
.pointer { position: absolute; left: 828px; top: 430px; width: 220px; height: 210px; fill: none; }
```
